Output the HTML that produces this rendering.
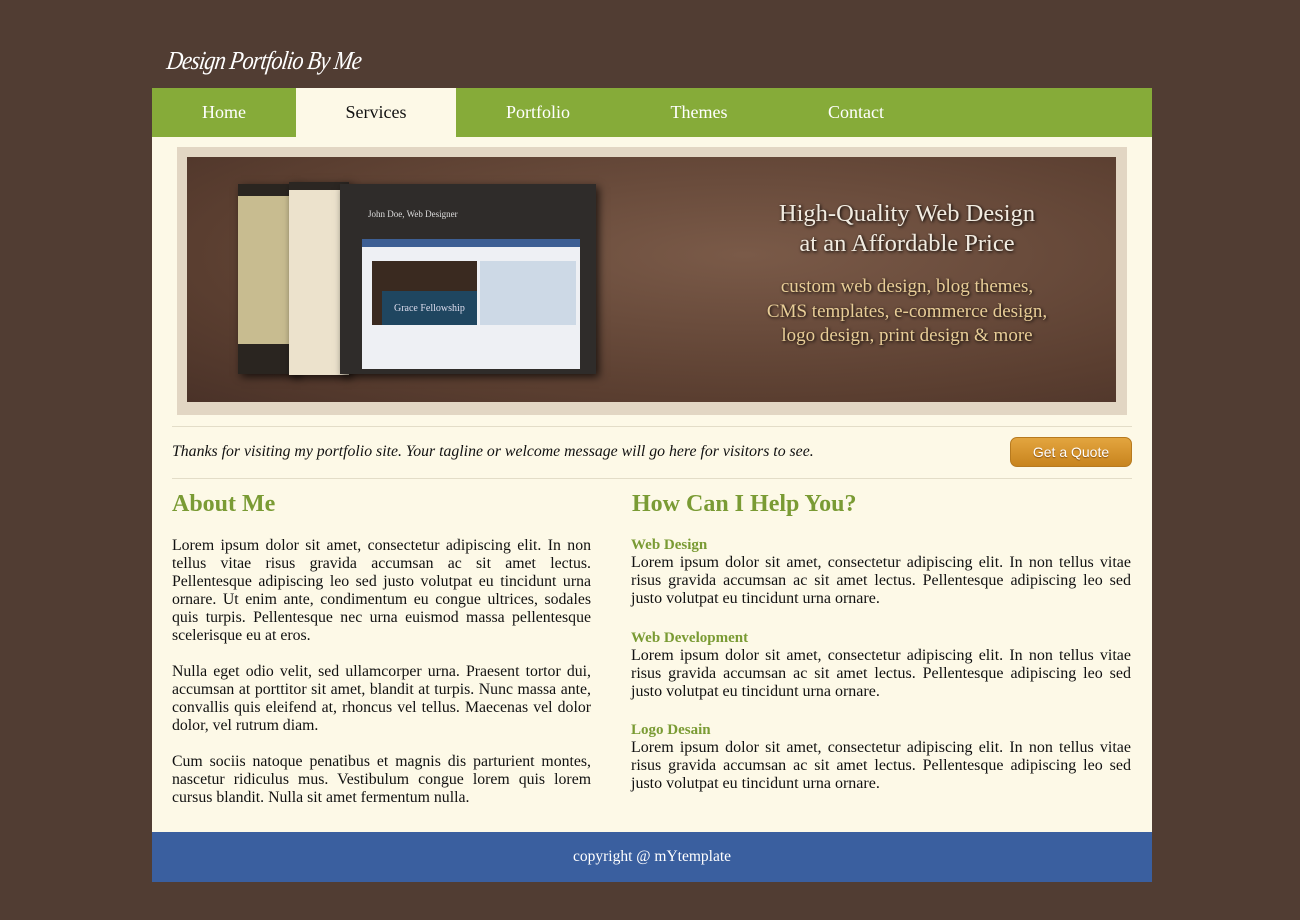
<!DOCTYPE html>
<html><head><meta charset="utf-8"><style>
*{margin:0;padding:0;box-sizing:border-box}
body{background:#513d33;width:1300px;height:920px;font-family:"Liberation Serif",serif;position:relative;overflow:hidden}
.logo{position:absolute;left:167px;top:46px;color:#fff;font:italic 26px "Liberation Serif",serif;letter-spacing:-1px;transform:skewX(-8deg) scaleX(0.86);transform-origin:left}
.wrap{position:absolute;left:152px;top:88px;width:1000px;height:794px;background:#fdf9e7}
.nav{height:49px;background:#86ab39;position:relative}
.nav span{position:absolute;top:0;height:49px;line-height:48px;color:#fff;font-size:18px;text-align:center}
.nav .act{background:#fdf9e7;color:#111}
.ban{position:absolute;left:25px;top:59px;width:950px;height:268px;background:#e2d6c3}
.bi{position:absolute;left:10px;top:10px;width:929px;height:245px;background:radial-gradient(ellipse at 60% 40%,#7a5a48,#5a3e30 70%,#4a3228);overflow:hidden}
.bt{position:absolute;left:540px;width:360px;text-align:center;font-family:"Liberation Serif",serif;text-shadow:1px 1px 3px #000}
.line{position:absolute;left:20px;width:960px;height:1px;background:#e3ddc8}
.tag{position:absolute;left:20px;top:355px;font-style:italic;font-size:15.8px;color:#111}
.btn{position:absolute;left:858px;top:349px;width:122px;height:30px;border-radius:7px;background:linear-gradient(#e3a53f,#c8841e);border:1px solid #b77a1f;color:#fff;font:14px "Liberation Sans",sans-serif;text-align:center;line-height:28px;text-shadow:0 1px 1px #865010}
h2{position:absolute;color:#7a9b34;font-size:24px;font-weight:bold}
.col{position:absolute;font-size:15.8px;line-height:18px;color:#111;text-align:justify}
.col p{margin-bottom:18px}
.col .j{text-align-last:justify}
.col h4{color:#7a9b34;font-size:15px;font-weight:bold;line-height:18px}
.foot{position:absolute;left:0;top:744px;width:1000px;height:50px;background:#3a5f9f;color:#fff;text-align:center;line-height:50px;font-size:15.5px}
.pg{position:absolute;box-shadow:3px 3px 8px rgba(0,0,0,.7)}
</style></head><body>
<div class="logo">Design Portfolio By Me</div>
<div class="wrap">
<div class="nav">
<span style="left:0;width:144px">Home</span>
<span class="act" style="left:144px;width:160px">Services</span>
<span style="left:304px;width:164px">Portfolio</span>
<span style="left:468px;width:158px">Themes</span>
<span style="left:626px;width:156px">Contact</span>
</div>
<div class="ban"><div class="bi">
<div class="pg" style="left:51px;top:27px;width:60px;height:190px;background:linear-gradient(#2a2520 0 12px,#c8bc90 12px 160px,#2a2520 160px)"></div>
<div class="pg" style="left:102px;top:25px;width:60px;height:193px;background:linear-gradient(#2b2622 0 8px,#ece2cc 8px)"></div>
<div class="pg" style="left:153px;top:27px;width:256px;height:190px;background:#2f2c2a">
<div style="position:absolute;left:28px;top:25px;color:#ddd;font-size:9px">John Doe, Web Designer</div>
<div style="position:absolute;left:22px;top:55px;width:218px;height:130px;background:#eef0f4;border-top:8px solid #3d5f94">
<div style="position:absolute;left:10px;top:14px;width:105px;height:64px;background:#3a2a20"><div style="position:absolute;left:10px;top:30px;width:95px;height:34px;background:#1f4660;color:#dde;font-size:10px;padding:12px 0 0 12px">Grace Fellowship</div></div>
<div style="position:absolute;left:118px;top:14px;width:96px;height:64px;background:#cdd9e6"></div>
</div></div>
<div class="bt" style="top:42px;font-size:24.5px;color:#f1ebe0;line-height:30px">High-Quality Web Design<br>at an Affordable Price</div>
<div class="bt" style="top:118px;font-size:19px;color:#e8cd97;line-height:24.5px">custom web design, blog themes,<br>CMS templates, e-commerce design,<br>logo design, print design &amp; more</div>
</div></div>
<div class="line" style="top:338px"></div>
<div class="tag">Thanks for visiting my portfolio site. Your tagline or welcome message will go here for visitors to see.</div>
<div class="btn">Get a Quote</div>
<div class="line" style="top:390px"></div>
<h2 style="left:20px;top:403px">About Me</h2>
<h2 style="left:480px;top:403px">How Can I Help You?</h2>
<div class="col" style="left:20px;top:449px;width:419px">
<p>Lorem ipsum dolor sit amet, consectetur adipiscing elit. In non tellus vitae risus gravida accumsan ac sit amet lectus. Pellentesque adipiscing leo sed justo volutpat eu tincidunt urna ornare. Ut enim ante, condimentum eu congue ultrices, sodales quis turpis. Pellentesque nec urna euismod massa pellentesque scelerisque eu at eros.</p>
<p>Nulla eget odio velit, sed ullamcorper urna. Praesent tortor dui, accumsan at porttitor sit amet, blandit at turpis. Nunc massa ante, convallis quis eleifend at, rhoncus vel tellus. Maecenas vel dolor dolor, vel rutrum diam.</p>
<p>Cum sociis natoque penatibus et magnis dis parturient montes, nascetur ridiculus mus. Vestibulum congue lorem quis lorem cursus blandit. Nulla sit amet fermentum nulla.</p>
</div>
<div class="col" style="left:479px;top:448px;width:500px;font-size:16px">
<h4>Web Design</h4><div class="j">Lorem ipsum dolor sit amet, consectetur adipiscing elit. In non tellus vitae risus gravida accumsan ac sit amet lectus. Pellentesque adipiscing leo sed</div><p>justo volutpat eu tincidunt urna ornare.</p>
<h4 style="margin-top:21px">Web Development</h4><div class="j">Lorem ipsum dolor sit amet, consectetur adipiscing elit. In non tellus vitae risus gravida accumsan ac sit amet lectus. Pellentesque adipiscing leo sed</div><p>justo volutpat eu tincidunt urna ornare.</p>
<h4 style="margin-top:20px">Logo Desain</h4><div class="j">Lorem ipsum dolor sit amet, consectetur adipiscing elit. In non tellus vitae risus gravida accumsan ac sit amet lectus. Pellentesque adipiscing leo sed</div><p>justo volutpat eu tincidunt urna ornare.</p>
</div>
<div class="foot">copyright @ mYtemplate</div>
</div>
</body></html>
